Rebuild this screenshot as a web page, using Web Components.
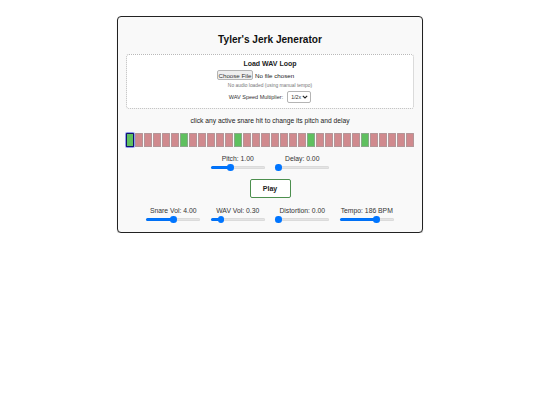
<!DOCTYPE html>
<html>
<head>
<meta charset="utf-8">
<title>Tyler's Jerk Jenerator</title>
<style>
    html, body {
        margin: 0;
        background: #fff;
        font-family: "Liberation Sans", Arial, sans-serif;
    }
</style>
</head>
<body>
<jerk-app></jerk-app>
<script>
class SliderControl extends HTMLElement {
    constructor() {
        super()
        this.attachShadow({ mode: 'open' })
    }

    connectedCallback() {
        const label = this.getAttribute('label')
        const value = this.getAttribute('value')
        const text = this.getAttribute('text')
        this.shadowRoot.innerHTML = `
            <style>
                :host {
                    display: flex;
                    flex-direction: column;
                    align-items: center;
                    width: 54px;
                    font-size: 6.8px;
                    color: #333;
                }

                .label {
                    white-space: nowrap;
                    line-height: 8px;
                    margin-bottom: 1px;
                }

                input {
                    -webkit-appearance: none;
                    appearance: none;
                    display: block;
                    width: 54px;
                    height: 7px;
                    margin: 0;
                    background: transparent;
                }

                input::-webkit-slider-runnable-track {
                    height: 3px;
                    border-radius: 2px;
                    background: linear-gradient(to right, #0075ff ${value}%, #e4e4e4 ${value}%);
                    box-shadow: inset 0 0 0 0.5px rgba(0, 0, 0, 0.08);
                }

                input::-webkit-slider-thumb {
                    -webkit-appearance: none;
                    width: 6.5px;
                    height: 6.5px;
                    margin-top: -1.75px;
                    border-radius: 50%;
                    background: #0075ff;
                }
            </style>
            <span class="label">${label}: ${text}</span>
            <input type="range" min="0" max="100" value="${value}" aria-label="${label}">
        `
    }
}

class StepGrid extends HTMLElement {
    constructor() {
        super()
        this.attachShadow({ mode: 'open' })
    }

    connectedCallback() {
        const active = [0, 6, 12, 20, 26]
        let cells = ''
        for (let i = 0; i < 32; i++) {
            const cls = active.includes(i) ? 'step on' : 'step'
            cells += `<div class="${i === 0 ? cls + ' current' : cls}"></div>`
        }
        this.shadowRoot.innerHTML = `
            <style>
                :host {
                    display: grid;
                    grid-template-columns: repeat(32, 1fr);
                    gap: 1px;
                    width: 288px;
                }

                .step {
                    height: 14px;
                    box-sizing: border-box;
                    background: #d08a8e;
                    border: 0.5px solid #b39698;
                    border-radius: 0.5px;
                }

                .step.on {
                    background: #5fc05f;
                    border-color: #8aa88a;
                }

                .step.current {
                    border: 1px solid #12126e;
                    outline: 0.5px solid #8f9cf0;
                }
            </style>
            ${cells}
        `
    }
}

class LoopLoader extends HTMLElement {
    constructor() {
        super()
        this.attachShadow({ mode: 'open' })
    }

    connectedCallback() {
        const chevron = "data:image/svg+xml,%3Csvg xmlns='http://www.w3.org/2000/svg' width='6' height='4'%3E%3Cpath d='M.8.8 3 3l2.2-2.2' fill='none' stroke='%23222' stroke-width='1.1'/%3E%3C/svg%3E"
        this.shadowRoot.innerHTML = `
            <style>
                :host {
                    display: flex;
                    flex-direction: column;
                    align-items: center;
                    box-sizing: border-box;
                    width: 288px;
                    height: 55px;
                    padding-top: 5px;
                    background: #fff;
                    border: 1px dotted #b8b8b8;
                    border-radius: 3px;
                    color: #222;
                }

                h3 {
                    margin: 0 0 2px;
                    font-size: 7px;
                    line-height: 8px;
                    font-weight: bold;
                }

                input[type=file] {
                    width: 106px;
                    height: 10px;
                    font: 6.2px "Liberation Sans", Arial, sans-serif;
                    color: #222;
                }

                input[type=file]::file-selector-button {
                    font: 6.2px "Liberation Sans", Arial, sans-serif;
                    color: #333;
                    width: 36px;
                    height: 10px;
                    padding: 0;
                    margin-right: 2px;
                    background: #efefef;
                    border: 0.5px solid #b4b4b4;
                    border-radius: 2px;
                }

                .status {
                    margin-top: 3px;
                    font-size: 4.9px;
                    line-height: 6px;
                    color: #777;
                }

                .speed {
                    display: flex;
                    align-items: center;
                    gap: 4px;
                    margin-top: 2px;
                    font-size: 5.5px;
                    color: #333;
                }

                select {
                    -webkit-appearance: none;
                    appearance: none;
                    width: 24px;
                    height: 12px;
                    padding: 0 0 0 3px;
                    font: 5.3px "Liberation Sans", Arial, sans-serif;
                    color: #333;
                    background: #fff url("${chevron}") no-repeat right 2px center;
                    border: 0.5px solid #b4b4b4;
                    border-radius: 2px;
                }
            </style>
            <h3>Load WAV Loop</h3>
            <input type="file" accept=".wav" aria-label="Load WAV Loop">
            <div class="status">No audio loaded (using manual tempo)</div>
            <label class="speed">WAV Speed Multiplier:
                <select><option>1/2x</option><option>1x</option><option>2x</option></select>
            </label>
        `
    }
}

class JerkApp extends HTMLElement {
    constructor() {
        super()
        this.attachShadow({ mode: 'open' })
    }

    connectedCallback() {
        this.shadowRoot.innerHTML = `
            <style>
                :host {
                    display: flex;
                    justify-content: center;
                    padding-top: 16px;
                }

                .card {
                    display: flex;
                    flex-direction: column;
                    align-items: center;
                    box-sizing: border-box;
                    width: 306px;
                    height: 217px;
                    padding-top: 17px;
                    background: #f9f9f9;
                    border: 1px solid #222;
                    border-radius: 4px;
                    box-shadow: 0 1px 1px rgba(0, 0, 0, 0.2);
                }

                h1 {
                    margin: 0 0 8px;
                    font-size: 10.1px;
                    line-height: 12px;
                    font-weight: bold;
                    color: #111;
                }

                .hint {
                    margin: 8px 0 8px;
                    font-size: 6.7px;
                    line-height: 8px;
                    color: #222;
                }

                .row {
                    display: flex;
                    justify-content: center;
                    gap: 10.5px;
                }

                .row.top {
                    margin-top: 8px;
                }

                button {
                    width: 41px;
                    height: 19px;
                    margin: 8px 0 9px;
                    padding: 0;
                    font: bold 7px "Liberation Sans", Arial, sans-serif;
                    color: #222;
                    background: #fff;
                    border: 1px solid #4c8f4e;
                    border-radius: 2px;
                }
            </style>
            <div class="card">
                <h1>Tyler's Jerk Jenerator</h1>
                <loop-loader></loop-loader>
                <div class="hint">click any active snare hit to change its pitch and delay</div>
                <step-grid></step-grid>
                <div class="row top">
                    <slider-control label="Pitch" text="1.00" value="35"></slider-control>
                    <slider-control label="Delay" text="0.00" value="0"></slider-control>
                </div>
                <button>Play</button>
                <div class="row">
                    <slider-control label="Snare Vol" text="4.00" value="50"></slider-control>
                    <slider-control label="WAV Vol" text="0.30" value="15"></slider-control>
                    <slider-control label="Distortion" text="0.00" value="0"></slider-control>
                    <slider-control label="Tempo" text="186 BPM" value="71"></slider-control>
                </div>
            </div>
        `
    }
}

customElements.define('slider-control', SliderControl)
customElements.define('step-grid', StepGrid)
customElements.define('loop-loader', LoopLoader)
customElements.define('jerk-app', JerkApp)
</script>
</body>
</html>
